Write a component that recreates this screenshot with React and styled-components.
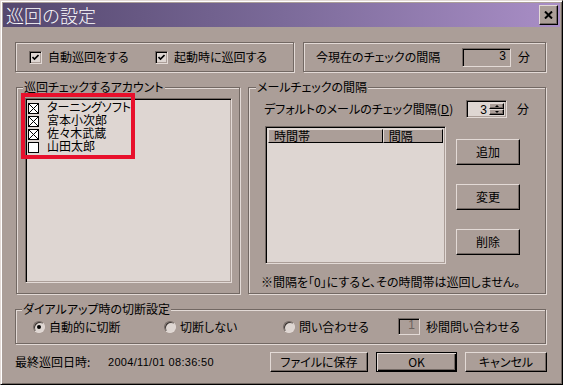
import React from 'react';
import styled, { createGlobalStyle, css } from 'styled-components';

const FACE = '#ab9e98';
const LIGHT = '#e3dad6';
const SHADOW = '#726863';
const DARK = '#000';
const WELL = '#ded6d2';

const GlobalStyle = createGlobalStyle`
  html, body {
    margin: 0;
    padding: 0;
    background: ${FACE};
  }
  body {
    font-family: "Noto Sans CJK JP", "Noto Sans", sans-serif;
    font-size: 12px;
    line-height: 14px;
    color: #000;
    font-feature-settings: "palt";
  }
  * {
    box-sizing: border-box;
  }
`;

const raised = css`
  border: 1px solid;
  border-color: ${LIGHT} ${DARK} ${DARK} ${LIGHT};
  box-shadow: inset -1px -1px 0 ${SHADOW};
`;

const sunken = css`
  border: 1px solid;
  border-color: ${SHADOW} ${LIGHT} ${LIGHT} ${SHADOW};
  box-shadow: inset 1px 1px 0 ${DARK}, inset -1px -1px 0 ${FACE};
`;

const Window = styled.div`
  width: 563px;
  height: 385px;
  padding: 2px;
  background: ${FACE};
  border: 1px solid;
  border-color: ${LIGHT} ${DARK} ${DARK} ${LIGHT};
  box-shadow: inset 1px 1px 0 #fff, inset -1px -1px 0 ${SHADOW};
  display: flex;
  flex-direction: column;
`;

const TitleBar = styled.div`
  height: 24px;
  flex: none;
  display: flex;
  align-items: center;
  justify-content: space-between;
  padding: 0 2px 0 3px;
  background: linear-gradient(to right, #54476e, #7b6a99 50%, #a98ec6);
`;

const TitleText = styled.span`
  color: #fff;
  font-size: 18px;
  line-height: 22px;
  font-weight: 300;
  font-feature-settings: normal;
`;

const CloseButton = styled.button`
  ${raised};
  width: 19px;
  height: 20px;
  padding: 0;
  background: ${FACE};
  display: flex;
  align-items: center;
  justify-content: center;
`;

const Body = styled.div`
  flex: 1;
  display: flex;
  flex-direction: column;
  padding: 15px 13px 0 12px;
`;

const Row = styled.div`
  display: flex;
  gap: ${p => p.$gap ?? 0}px;
  height: ${p => p.$h}px;
  margin-top: ${p => p.$top ?? 0}px;
  flex: none;
`;

const Group = styled.div`
  position: relative;
  width: ${p => p.$w}px;
  height: 100%;
  margin-left: ${p => p.$ml ?? 0}px;
  border: 1px solid ${SHADOW};
  box-shadow: inset 1px 1px 0 ${LIGHT}, 1px 1px 0 ${LIGHT};
`;

const Caption = styled.span`
  position: absolute;
  top: -8px;
  left: ${p => p.$left}px;
  padding: 0 1px;
  background: ${FACE};
  white-space: nowrap;
`;

const InlineBox = styled.div`
  height: 100%;
  display: flex;
  align-items: center;
  padding-left: ${p => p.$pl}px;
`;

const CheckItem = styled.label`
  display: flex;
  align-items: center;
  gap: 6px;
  width: ${p => (p.$w ? `${p.$w}px` : 'auto')};
  white-space: nowrap;
`;

const Check3D = styled.span`
  ${sunken};
  width: 13px;
  height: 13px;
  flex: none;
  background: ${WELL};
  display: flex;
  align-items: center;
  justify-content: center;
`;

const FieldLabel = styled.span`
  flex: 0 0 ${p => p.$w}px;
  white-space: nowrap;
`;

const ReadOnlyField = styled.span`
  ${sunken};
  width: ${p => p.$w}px;
  height: ${p => p.$h}px;
  padding-right: 4px;
  text-align: right;
  line-height: ${p => p.$h - 4}px;
  color: ${p => (p.$dim ? '#6d6460' : '#000')};
  background: ${FACE};
  font-family: "Liberation Sans", sans-serif;
`;

const Unit = styled.span`
  margin-left: ${p => p.$ml}px;
`;

const AccountBody = styled.div`
  height: 100%;
  padding: 10px 0 0 8px;
`;

const ListBox = styled.div`
  ${sunken};
  width: ${p => p.$w}px;
  height: ${p => p.$h}px;
  background: ${WELL};
  padding: 3px 0 0 2px;
`;

const AccountRow = styled.div`
  height: 13px;
  line-height: 13px;
  display: flex;
  align-items: center;
  gap: 8px;
  white-space: nowrap;
  font-family: "Liberation Sans", "Noto Sans CJK JP", sans-serif;
`;

const FlatCheck = styled.span`
  width: 11px;
  height: 11px;
  flex: none;
  border: 1px solid #000;
  background: #fff;
  display: flex;
`;

const Marker = styled.div`
  position: absolute;
  left: 4px;
  top: 5px;
  width: 114px;
  height: 66px;
  border: 4px solid #e8102c;
  pointer-events: none;
`;

const MailBody = styled.div`
  height: 100%;
  display: flex;
  flex-direction: column;
  padding: 12px 0 0 12px;
`;

const SpinRow = styled.div`
  display: flex;
  align-items: center;
  height: 18px;
  margin-left: 3px;
`;

const Spin = styled.div`
  ${sunken};
  width: 41px;
  height: 18px;
  display: flex;
  background: ${WELL};
  padding: 2px;
`;

const SpinValue = styled.span`
  flex: 1;
  text-align: right;
  padding-right: 2px;
  line-height: 14px;
  font-family: "Liberation Sans", sans-serif;
`;

const SpinButtons = styled.div`
  width: 15px;
  display: flex;
  flex-direction: column;
`;

const SpinButton = styled.span`
  ${raised};
  flex: 1;
  background: ${FACE};
  display: flex;
  align-items: center;
  justify-content: center;

  &::after {
    content: '';
    border-left: 2px solid transparent;
    border-right: 2px solid transparent;
    ${p => (p.$down
      ? css`border-top: 2px solid #000;`
      : css`border-bottom: 2px solid #000;`)}
  }
`;

const MiddleRow = styled.div`
  display: flex;
  gap: 10px;
  margin: 8px 0 0 4px;
`;

const ListView = styled.div`
  ${sunken};
  width: 181px;
  height: 138px;
  padding: 2px;
  background: ${WELL};
`;

const HeaderRow = styled.div`
  display: flex;
  height: 14px;
`;

const HeaderCell = styled.span`
  width: ${p => p.$w}px;
  border: 1px solid;
  border-color: ${LIGHT} ${DARK} ${DARK} ${LIGHT};
  background: ${FACE};
  padding-left: 5px;
  line-height: 12px;
`;

const ButtonColumn = styled.div`
  display: flex;
  flex-direction: column;
  gap: 19px;
  padding-top: 13px;
`;

const PushButton = styled.button`
  ${raised};
  width: ${p => p.$w}px;
  height: ${p => p.$h}px;
  padding: 0;
  font: inherit;
  color: #000;
  background: ${FACE};
  white-space: nowrap;

  ${p => p.$default && css`
    border: 1px solid #000;
    box-shadow: inset 1px 1px 0 ${LIGHT}, inset -1px -1px 0 #000, inset -2px -2px 0 ${SHADOW};
  `}
`;

const Note = styled.div`
  margin-top: 11px;
  white-space: nowrap;
`;

const RadioItem = styled.label`
  display: flex;
  align-items: center;
  gap: 4px;
  width: ${p => p.$w}px;
  white-space: nowrap;
`;

const Radio = styled.span`
  width: 12px;
  height: 12px;
  flex: none;
  border-radius: 50%;
  border: 1px solid;
  border-color: ${SHADOW} ${LIGHT} ${LIGHT} ${SHADOW};
  box-shadow: inset 1px 1px 0 #3b3431;
  background: ${WELL};
  display: flex;
  align-items: center;
  justify-content: center;

  &::after {
    content: '';
    display: ${p => (p.$on ? 'block' : 'none')};
    width: 4px;
    height: 4px;
    border-radius: 50%;
    background: #000;
  }
`;

const BottomBar = styled.div`
  display: flex;
  align-items: center;
  height: 20px;
  margin-top: 8px;
`;

const Stamp = styled.span`
  width: ${p => p.$w}px;
  white-space: nowrap;
`;

const DateText = styled.span`
  font-family: "Liberation Sans", sans-serif;
  font-size: 11px;
  letter-spacing: 0.3px;
`;

const ButtonGroup = styled.div`
  margin-left: auto;
  display: flex;
  gap: 8px;
`;

const CheckMark = () => (
  <svg width="7" height="7" viewBox="0 0 7 7">
    <path d="M0.5 3 L2.5 5 L6.5 1" fill="none" stroke="#000" strokeWidth="1.6" />
  </svg>
);

const CrossMark = () => (
  <svg width="9" height="9" viewBox="0 0 9 9">
    <path d="M0 0 L9 9 M9 0 L0 9" stroke="#000" strokeWidth="1" />
  </svg>
);

const accounts = [
  { name: 'ターニングソフト', on: true },
  { name: '宮本小次郎', on: true },
  { name: '佐々木武蔵', on: true },
  { name: '山田太郎', on: false },
];

export default function App() {
  return (
    <>
      <GlobalStyle />
      <Window>
        <TitleBar>
          <TitleText>巡回の設定</TitleText>
          <CloseButton aria-label="閉じる">
            <svg width="9" height="8" viewBox="0 0 9 8">
              <path d="M1 0.5 L8 7.5 M8 0.5 L1 7.5" stroke="#000" strokeWidth="2" />
            </svg>
          </CloseButton>
        </TitleBar>

        <Body>
          <Row $h={30} $gap={9}>
            <Group $w={279}>
              <InlineBox $pl={13}>
                <CheckItem $w={126}>
                  <Check3D><CheckMark /></Check3D>
                  自動巡回をする
                </CheckItem>
                <CheckItem>
                  <Check3D><CheckMark /></Check3D>
                  起動時に巡回する
                </CheckItem>
              </InlineBox>
            </Group>
            <Group $w={243}>
              <InlineBox $pl={12}>
                <FieldLabel $w={146}>今現在のチェックの間隔</FieldLabel>
                <ReadOnlyField $w={49} $h={19}>3</ReadOnlyField>
                <Unit $ml={7}>分</Unit>
              </InlineBox>
            </Group>
          </Row>

          <Row $h={207} $top={15} $gap={8}>
            <Group $w={224} $ml={1}>
              <Caption $left={6}>巡回チェックするアカウント</Caption>
              <AccountBody>
                <ListBox $w={207} $h={185}>
                  {accounts.map(a => (
                    <AccountRow key={a.name}>
                      <FlatCheck>{a.on && <CrossMark />}</FlatCheck>
                      {a.name}
                    </AccountRow>
                  ))}
                </ListBox>
              </AccountBody>
              <Marker />
            </Group>

            <Group $w={298}>
              <Caption $left={7}>メールチェックの間隔</Caption>
              <MailBody>
                <SpinRow>
                  <FieldLabel $w={202}>デフォルトのメールのチェック間隔(<u>D</u>)</FieldLabel>
                  <Spin>
                    <SpinValue>3</SpinValue>
                    <SpinButtons>
                      <SpinButton />
                      <SpinButton $down />
                    </SpinButtons>
                  </Spin>
                  <Unit $ml={10}>分</Unit>
                </SpinRow>

                <MiddleRow>
                  <ListView>
                    <HeaderRow>
                      <HeaderCell $w={116}>時間帯</HeaderCell>
                      <HeaderCell $w={61}>間隔</HeaderCell>
                    </HeaderRow>
                  </ListView>
                  <ButtonColumn>
                    <PushButton $w={64} $h={26}>追加</PushButton>
                    <PushButton $w={64} $h={26}>変更</PushButton>
                    <PushButton $w={64} $h={26}>削除</PushButton>
                  </ButtonColumn>
                </MiddleRow>

                <Note>※間隔を「0」にすると、その時間帯は巡回しません。</Note>
              </MailBody>
            </Group>
          </Row>

          <Row $h={35} $top={15}>
            <Group $w={531}>
              <Caption $left={6}>ダイアルアップ時の切断設定</Caption>
              <InlineBox $pl={17}>
                <RadioItem $w={131}>
                  <Radio $on />
                  自動的に切断
                </RadioItem>
                <RadioItem $w={119}>
                  <Radio />
                  切断しない
                </RadioItem>
                <RadioItem $w={115}>
                  <Radio />
                  問い合わせる
                </RadioItem>
                <ReadOnlyField $w={22} $h={17} $dim>1</ReadOnlyField>
                <Unit $ml={6}>秒間問い合わせる</Unit>
              </InlineBox>
            </Group>
          </Row>

          <BottomBar>
            <Stamp $w={93}>最終巡回日時:</Stamp>
            <DateText>2004/11/01 08:36:50</DateText>
            <ButtonGroup>
              <PushButton $w={98} $h={20}>ファイルに保存</PushButton>
              <PushButton $w={81} $h={20} $default>OK</PushButton>
              <PushButton $w={82} $h={20}>キャンセル</PushButton>
            </ButtonGroup>
          </BottomBar>
        </Body>
      </Window>
    </>
  );
}
